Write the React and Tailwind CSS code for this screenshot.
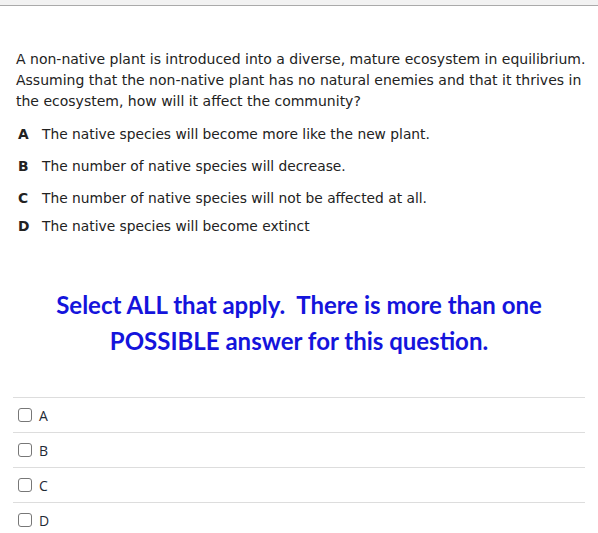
import React from 'react';

const options = [
  { key: 'A', text: 'The native species will become more like the new plant.', mt: 'mt-0' },
  { key: 'B', text: 'The number of native species will decrease.', mt: 'mt-[14px]' },
  { key: 'C', text: 'The number of native species will not be affected at all.', mt: 'mt-[14px]' },
  { key: 'D', text: 'The native species will become extinct', mt: 'mt-[10px]' },
];

const App = () => {
  return (
    <div className="w-[598px] h-[533px] bg-white overflow-hidden">
      <div className="h-[6px] bg-[#f2f2f2] border-b border-[#aaaaaa]" />

      <div className="pl-4 pr-3 pt-[43px] text-[14px] leading-[21px] text-[#222]" style={{ fontFamily: '"DejaVu Sans", Verdana, sans-serif' }}>
        <p>
          A non-native plant is introduced into a diverse, mature ecosystem in equilibrium. Assuming that the non-native plant has no natural enemies and that it thrives in the ecosystem, how will it affect the community?
        </p>

        <div className="mt-[13px] flex flex-col text-[13.8px] leading-[18px]">
          {options.map((o) => (
            <div key={o.key} className={`flex ${o.mt}`}>
              <span className="w-[26px] pl-[2px] font-bold">{o.key}</span>
              <span>{o.text}</span>
            </div>
          ))}
        </div>
      </div>

      <div
        className="mt-[52px] text-center text-[24px] leading-[36px] font-bold text-[#1414dc]"
        style={{ fontFamily: 'Lato, sans-serif' }}
      >
        Select ALL that apply.&nbsp; There is more than one
        <br />
        POSSIBLE answer for this question.
      </div>

      <div className="mt-[38px] ml-[13px] w-[572px]" style={{ fontFamily: '"Open Sans", sans-serif' }}>
        {options.map((o) => (
          <div key={o.key} className="h-[35px] border-t border-[#dddddd] flex items-center gap-[7px] pl-[5px]">
            <span className="w-[14px] h-[14px] rounded-[3px] border border-[#777] bg-white" />
            <span className="text-[14px] text-[#1f2a36]">{o.key}</span>
          </div>
        ))}
      </div>
    </div>
  );
};

export default App;
